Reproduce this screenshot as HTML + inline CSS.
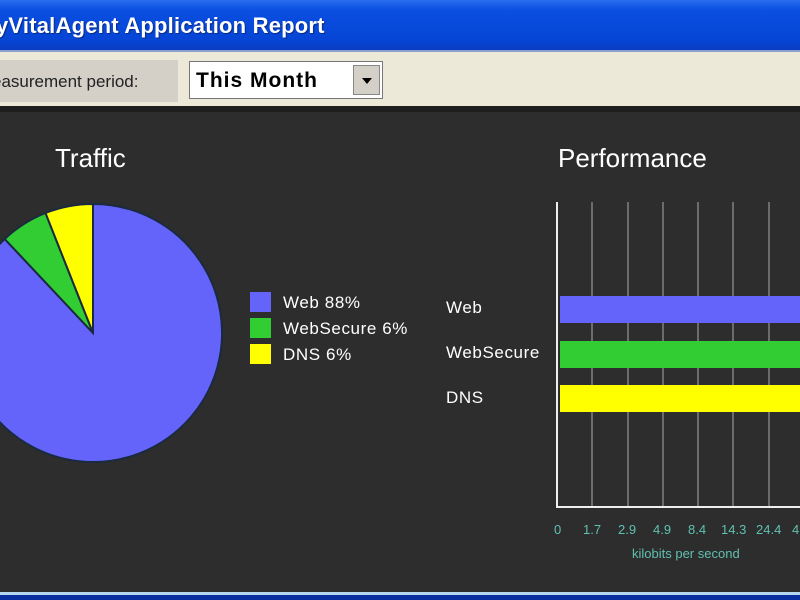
<!DOCTYPE html>
<html><head><style>
body{margin:0;width:800px;height:600px;overflow:hidden;background:#2d2d2d;font-family:"Liberation Sans",sans-serif;position:relative}
.t{position:absolute;left:0;top:0;width:800px;height:50px;background:linear-gradient(#2a6df0,#0a4fe0 20%,#0645d6 80%,#0a3cc0);}
.t span{position:absolute;left:-4px;top:13px;color:#fff;font-weight:bold;font-size:22px;letter-spacing:0.2px;text-shadow:1px 1px 1px #0a2a80}
.bar{position:absolute;left:0;top:50px;width:800px;height:56px;background:#ece9d8;border-top:2px solid #8aa0d0}
.lab{position:absolute;left:0;top:60px;width:178px;height:42px;background:#d4d0c8;color:#222;font-size:17px;line-height:44px;text-indent:-8px}
.sel{position:absolute;left:189px;top:61px;width:194px;height:38px;background:#fff;border:1px solid #777;box-sizing:border-box}
.sel b{position:absolute;left:6px;top:7px;font-size:21px;color:#000;letter-spacing:1px}
.arr{position:absolute;right:2px;top:3px;width:27px;height:30px;background:#d4d0c8;border:1px solid #888;box-sizing:border-box}
.arr:after{content:"";position:absolute;left:8px;top:12px;border:5px solid transparent;border-top:6px solid #000}
.sep{position:absolute;left:0;top:106px;width:800px;height:6px;background:#1e1e1e}
.h{position:absolute;color:#fff;font-size:26px}
.lg{position:absolute;color:#fff;font-size:17px;letter-spacing:0.6px}
.sq{position:absolute;width:21px;height:20px;left:250px}
.bl{position:absolute;left:0;top:592px;width:800px;height:3px;background:#b8d8f0}
.bl2{position:absolute;left:0;top:595px;width:800px;height:5px;background:#0a30a0}
.ax{position:absolute;color:#5fc0b0;font-size:13px}
</style></head><body>
<div class="t"><span>yVitalAgent Application Report</span></div>
<div class="bar"></div>
<div class="lab">easurement period:</div>
<div class="sel"><b>This Month</b><div class="arr"></div></div>
<div class="sep"></div>
<div class="h" style="left:55px;top:143px">Traffic</div>
<div class="h" style="left:558px;top:143px">Performance</div>
<svg width="800" height="600" style="position:absolute;left:0;top:0">
<g stroke="#1a2a40" stroke-width="2">
<path d="M93,333 L93,204 A129,129 0 1 1 4.7,239 Z" fill="#6464fa"/>
<path d="M93,333 L4.7,239 A129,129 0 0 1 45.5,213 Z" fill="#32cd32"/>
<path d="M93,333 L45.5,213 A129,129 0 0 1 93,204 Z" fill="#ffff00"/>
</g>
<g stroke="#aaa" stroke-width="1">
<line x1="592" y1="202" x2="592" y2="507"/><line x1="628" y1="202" x2="628" y2="507"/><line x1="663" y1="202" x2="663" y2="507"/><line x1="698" y1="202" x2="698" y2="507"/><line x1="733" y1="202" x2="733" y2="507"/><line x1="769" y1="202" x2="769" y2="507"/>
</g>
<line x1="557" y1="202" x2="557" y2="508" stroke="#eee" stroke-width="2"/>
<line x1="556" y1="507" x2="800" y2="507" stroke="#eee" stroke-width="2"/>
<rect x="560" y="296" width="240" height="27" fill="#6464fa"/>
<rect x="560" y="341" width="240" height="27" fill="#32cd32"/>
<rect x="560" y="385" width="240" height="27" fill="#ffff00"/>
</svg>
<div class="sq" style="top:292px;background:#6464fa"></div>
<div class="sq" style="top:318px;background:#32cd32"></div>
<div class="sq" style="top:344px;background:#ffff00"></div>
<div class="lg" style="left:283px;top:293px">Web 88%</div>
<div class="lg" style="left:283px;top:319px">WebSecure 6%</div>
<div class="lg" style="left:283px;top:345px">DNS 6%</div>
<div class="lg" style="left:446px;top:298px">Web</div>
<div class="lg" style="left:446px;top:343px">WebSecure</div>
<div class="lg" style="left:446px;top:388px">DNS</div>
<div class="ax" style="left:554px;top:522px">0</div>
<div class="ax" style="left:583px;top:522px">1.7</div>
<div class="ax" style="left:618px;top:522px">2.9</div>
<div class="ax" style="left:653px;top:522px">4.9</div>
<div class="ax" style="left:688px;top:522px">8.4</div>
<div class="ax" style="left:721px;top:522px">14.3</div>
<div class="ax" style="left:756px;top:522px">24.4</div>
<div class="ax" style="left:792px;top:522px">4</div>
<div class="ax" style="left:632px;top:546px">kilobits per second</div>
<div class="bl"></div><div class="bl2"></div>
</body></html>
